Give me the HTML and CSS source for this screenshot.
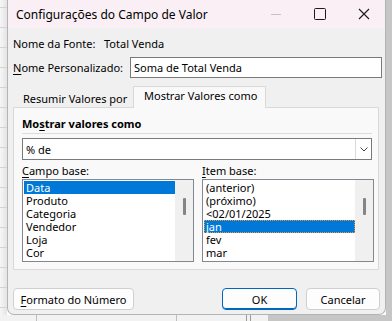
FILE: index.html
```html
<!DOCTYPE html>
<html lang="pt">
<head>
<meta charset="utf-8">
<link rel="stylesheet" href="styles.css">
</head>
<body>
<div class="screen">
  <div class="row-main">
    <div class="sheet-left"></div>
    <div class="dialog">
      <div class="titlebar">
        <span class="title">Configurações do Campo de Valor</span>
        <div class="controls">
          <span class="ctl ctl-min"><svg width="12" height="12" viewBox="0 0 12 12"><path d="M1 6.5H11" stroke="#c8c0c6" stroke-width="1"/></svg></span>
          <span class="ctl ctl-max"><svg width="12" height="12" viewBox="0 0 12 12"><rect x="0.5" y="0.5" width="11" height="11" rx="1" fill="none" stroke="#1a1a1a" stroke-width="1"/></svg></span>
          <span class="ctl ctl-close"><svg width="12" height="12" viewBox="0 0 12 12"><path d="M1 1L11 11M11 1L1 11" stroke="#1a1a1a" stroke-width="1.1"/></svg></span>
        </div>
      </div>
      <div class="body">
        <div class="line source">
          <span class="lbl">Nome da Fonte:</span>
          <span class="val">Total Venda</span>
        </div>
        <div class="line custom">
          <span class="lbl"><u>N</u>ome Personalizado:</span>
          <div class="textbox">Soma de Total Venda</div>
        </div>
        <div class="tabs">
          <div class="tab">Resumir Valores por</div>
          <div class="tab active">Mostrar Valores como</div>
        </div>
        <div class="panel">
          <div class="heading">Mo<u>s</u>trar valores como</div>
          <div class="combo">
            <span class="combo-text">% de</span>
            <span class="combo-btn"><svg width="8" height="5" viewBox="0 0 8 5"><path d="M0.5 0.5L4 4L7.5 0.5" fill="none" stroke="#444" stroke-width="1"/></svg></span>
          </div>
          <div class="lists">
            <div class="col">
              <div class="col-lbl"><u>C</u>ampo base:</div>
              <div class="listbox">
                <div class="items">
                  <div class="item sel">Data</div>
                  <div class="item">Produto</div>
                  <div class="item">Categoria</div>
                  <div class="item">Vendedor</div>
                  <div class="item">Loja</div>
                  <div class="item">Cor</div>
                </div>
                <div class="scroll"><div class="thumb"></div></div>
              </div>
            </div>
            <div class="col">
              <div class="col-lbl"><u>I</u>tem base:</div>
              <div class="listbox">
                <div class="items">
                  <div class="item">(anterior)</div>
                  <div class="item">(próximo)</div>
                  <div class="item">&lt;02/01/2025</div>
                  <div class="item sel focus">jan</div>
                  <div class="item">fev</div>
                  <div class="item">mar</div>
                </div>
                <div class="scroll"><div class="thumb"></div></div>
              </div>
            </div>
          </div>
        </div>
        <div class="buttons">
          <div class="btn btn-format"><u>F</u>ormato do Número</div>
          <div class="spacer"></div>
          <div class="btn btn-ok">OK</div>
          <div class="btn btn-cancel">Cancelar</div>
        </div>
      </div>
    </div>
    <div class="sheet-right"></div>
  </div>
  <div class="sheet-bottom"></div>
</div>
</body>
</html>
```

FILE: styles.css
```css
* { box-sizing: border-box; }
html, body { margin: 0; padding: 0; }
body {
  width: 392px;
  height: 321px;
  overflow: hidden;
  font-family: "Noto Sans", "Liberation Sans", sans-serif;
  font-size: 11px;
  color: #000;
  background: #fff;
  white-space: nowrap;
}
u { text-underline-offset: 2px; }
.screen { display: flex; flex-direction: column; width: 392px; height: 321px; }
.row-main { display: flex; height: 315px; }
.sheet-left {
  width: 7px;
  background:
    repeating-linear-gradient(to bottom, transparent 0, transparent 7px, #d4d4d4 7px, #d4d4d4 8px, transparent 8px, transparent 20px),
    linear-gradient(to right, #f6f6f6, #e4e4e4);
}
.sheet-right { width: 6px; background: #c6c6c6; }
.sheet-bottom {
  height: 6px;
  background:
    linear-gradient(to right, transparent 36px, #bdbdbd 36px, #bdbdbd 37px, transparent 37px, transparent 176px, #bdbdbd 176px, #bdbdbd 177px, transparent 177px, transparent 246px, #9a9a9a 246px, #9a9a9a 247px, transparent 247px, transparent 250px, #9a9a9a 250px, #9a9a9a 251px, transparent 251px, transparent 268px, #c6c6c6 268px),
    #f2f2f2;
}
.dialog {
  width: 379px;
  display: flex;
  flex-direction: column;
  border: 1px solid #b4b4b4;
  border-top: none;
  border-radius: 0 0 7px 7px;
  background: #f0f0f0;
  overflow: hidden;
}
.titlebar {
  height: 28px;
  flex: none;
  display: flex;
  align-items: center;
  background: #f9eff5;
  padding-left: 8px;
}
.title { flex: 1; font-size: 12px; padding-top: 1px; }
.controls { display: flex; height: 28px; }
.ctl { display: flex; align-items: center; justify-content: center; width: 46px; height: 28px; }
.ctl-min { width: 42px; }
.ctl-close { width: 42px; }
.body { flex: 1; display: flex; flex-direction: column; padding: 7px 3px 0 5px; }
.line { display: flex; align-items: center; }
.source { height: 16px; }
.source .lbl { width: 91px; flex: none; }
.custom { margin-top: 6px; height: 21px; }
.custom .lbl { width: 117px; flex: none; }
.textbox {
  flex: 1;
  height: 21px;
  background: #fff;
  border: 1px solid #7a7a7a;
  padding: 0 0 0 3px;
  display: flex;
  align-items: center;
}
.tabs { display: flex; align-items: flex-end; margin-top: 7px; height: 22px; }
.tab {
  height: 18px;
  flex: none;
  width: 120px;
  display: flex;
  align-items: center;
  padding-left: 10px;
  background: #f0f0f0;
}
.tab.active {
  height: 22px;
  width: 133px;
  padding-left: 10px;
  background: #f9f9f9;
  border: 1px solid #d9d9d9;
  border-bottom: none;
  position: relative;
  margin-bottom: -1px;
  z-index: 1;
  padding-bottom: 4px;
}
.panel {
  margin-right: 3px;
  background: #f9f9f9;
  border: 1px solid #d9d9d9;
  padding: 8px 6px 7px 8px;
}
.heading {
  font-weight: bold;
  height: 16px;
  line-height: 16px;
  border-bottom: 1px solid #dcdcdc;
  box-sizing: content-box;
  padding-bottom: 1px;
}
.combo {
  margin-top: 4px;
  height: 22px;
  background: #fff;
  border: 1px solid #7a7a7a;
  display: flex;
  align-items: stretch;
}
.combo-text { flex: 1; display: flex; align-items: center; padding-left: 3px; }
.combo-btn {
  width: 16px;
  border-left: 1px solid #dadada;
  display: flex;
  align-items: center;
  justify-content: center;
}
.lists { display: grid; grid-template-columns: 172px 172px; column-gap: 8px; margin-top: 3px; }
.col-lbl { height: 16px; line-height: 16px; }
.listbox {
  height: 83px;
  background: #fff;
  border: 1px solid #828790;
  display: flex;
  padding: 1px 0 1px 1px;
}
.items { flex: 1; overflow: hidden; }
.item { height: 13px; line-height: 13px; padding-left: 2px; }
.item.sel { background: #0078d7; color: #fff; }
.item.focus { outline: 1px dotted #e89a3c; outline-offset: -1px; }
.scroll {
  width: 18px;
  margin: -1px 0;
  background: #f0f0f0;
  display: flex;
  justify-content: center;
  padding-top: 18px;
}
.thumb { width: 3px; height: 17px; background: #858585; border-radius: 1px; }
.buttons { display: flex; margin-top: 18px; padding-right: 2px; }
.spacer { flex: 1; }
.btn {
  height: 22px;
  display: flex;
  align-items: center;
  justify-content: center;
  background: #fdfdfd;
  border: 1px solid #d0d0d0;
  border-radius: 4px;
}
.btn-format { width: 121px; }
.btn-ok { width: 75px; border-color: #0067c0; box-shadow: inset 0 -1px 0 #0067c0; }
.btn-cancel { width: 74px; margin-left: 9px; }
```
